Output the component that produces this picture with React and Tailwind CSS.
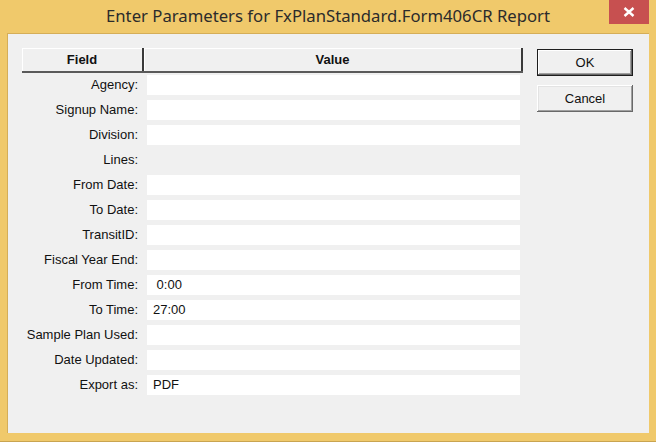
const rows = [
  { label: 'Agency:', value: '' },
  { label: 'Signup Name:', value: '' },
  { label: 'Division:', value: '' },
  { label: 'Lines:', value: null },
  { label: 'From Date:', value: '' },
  { label: 'To Date:', value: '' },
  { label: 'TransitID:', value: '' },
  { label: 'Fiscal Year End:', value: '' },
  { label: 'From Time:', value: ' 0:00' },
  { label: 'To Time:', value: '27:00' },
  { label: 'Sample Plan Used:', value: '' },
  { label: 'Date Updated:', value: '' },
  { label: 'Export as:', value: 'PDF' },
]

const ParamRow = ({ label, value }) => (
  <div className="flex h-[20px] items-center">
    <div className="w-[122px] pr-[6px] text-right">{label}</div>
    {value !== null && (
      <div className="ml-[3px] flex h-full w-[373px] items-center bg-white pl-[6px] whitespace-pre">{value}</div>
    )}
  </div>
)

export default function App() {
  return (
    <div
      className="flex h-[442px] w-[656px] flex-col border-b border-[#c9a450] bg-[#f0c96b] text-[13px] text-[#111]"
      style={{ fontFamily: '"Liberation Sans", Arial, sans-serif' }}
    >
      {/* Title bar */}
      <div className="grid h-[33px] grid-cols-[1fr_auto_1fr]">
        <div />
        <div
          className="flex items-center pb-[1px] text-[16.7px] text-[#2b2b2b]"
          style={{ fontFamily: '"Noto Sans", "Open Sans", sans-serif' }}
        >
          Enter Parameters for FxPlanStandard.Form406CR Report
        </div>
        <div className="flex justify-end">
          <div className="mr-[7px] flex h-[24px] w-[40px] items-center justify-center bg-[#c75050]">
            <svg width="12" height="10" viewBox="0 0 12 10">
              <path d="M1.5 1 L10.5 9 M10.5 1 L1.5 9" stroke="#fff" strokeWidth="2.4" />
            </svg>
          </div>
        </div>
      </div>

      {/* Client area */}
      <div className="mx-[7px] flex h-[400px] border-l border-t border-[#d5ae58] bg-[#f0f0f0] pl-[14px] pt-[14px]">
        <div className="flex w-[501px] flex-col">
          {/* Grid header */}
          <div className="flex h-[25px] border-b-2 border-[#5a5a5a] font-bold">
            <div className="flex w-[122px] items-center justify-center border-r-2 border-[#3a3a3a] bg-[#f0f0f0] shadow-[inset_1px_1px_#ffffff]">
              Field
            </div>
            <div className="flex flex-1 items-center justify-center border-r-2 border-[#3a3a3a] bg-[#f0f0f0] shadow-[inset_1px_1px_#ffffff]">
              Value
            </div>
          </div>

          {/* Parameter rows */}
          <div className="flex flex-col gap-[5px] pt-[2px]">
            {rows.map((r) => (
              <ParamRow key={r.label} label={r.label} value={r.value} />
            ))}
          </div>
        </div>

        {/* Buttons */}
        <div className="ml-[14px] mt-[1px] flex flex-col gap-[9px]">
          <div className="flex h-[27px] w-[96px] items-center justify-center border border-[#1e1e1e] bg-[#f0f0f0] shadow-[inset_-1px_-1px_#696969,inset_1px_1px_#ffffff,inset_-2px_-2px_#a0a0a0]">
            OK
          </div>
          <div className="flex h-[27px] w-[96px] items-center justify-center bg-[#f0f0f0] shadow-[inset_-1px_-1px_#696969,inset_1px_1px_#ffffff,inset_-2px_-2px_#a0a0a0,inset_2px_2px_#e3e3e3]">
            Cancel
          </div>
        </div>
      </div>
    </div>
  )
}
